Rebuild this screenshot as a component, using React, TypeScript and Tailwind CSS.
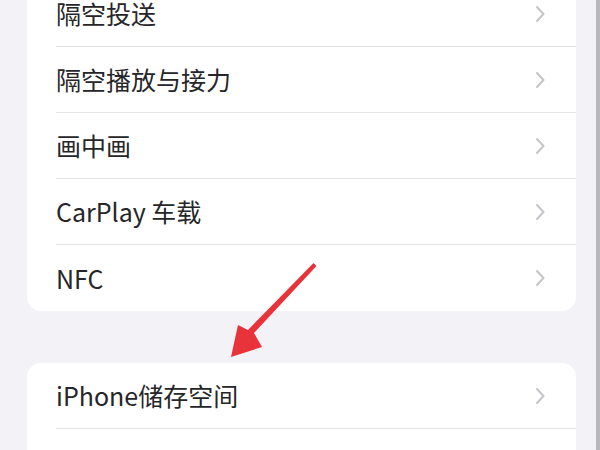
import React from 'react';

const groups: string[][] = [
  ['隔空投送', '隔空播放与接力', '画中画', 'CarPlay 车载', 'NFC'],
  ['iPhone储存空间', '后台App刷新'],
];

const Chevron = () => (
  <svg width="10" height="18" viewBox="0 0 10 18" fill="none" className="shrink-0">
    <path d="M2 2l6.5 7L2 16" stroke="#c4c4c9" strokeWidth="2" strokeLinecap="round" strokeLinejoin="round" />
  </svg>
);

const Row = ({ label, last }: { label: string; last: boolean }) => (
  <div className="flex h-[66px] shrink-0 pl-[29px]">
    <div
      className={
        'flex flex-1 items-center justify-between pr-[31px] ' +
        (last ? '' : 'border-b border-[#e3e3e8]')
      }
    >
      <span className="text-[25px] leading-none text-[#262628]">{label}</span>
      <Chevron />
    </div>
  </div>
);

export default function App() {
  return (
    <div
      className="relative flex h-[450px] w-[600px] overflow-hidden bg-[#f2f2f7]"
      style={{ fontFamily: '"Noto Sans CJK SC", "Noto Sans", sans-serif' }}
    >
      <div className="flex flex-1 flex-col gap-[52px] pl-[27px] pr-[20px] -mt-[19px]">
        {groups.map((items, gi) => (
          <div key={gi} className="shrink-0 overflow-hidden rounded-[14px] bg-white">
            {items.map((label, i) => (
              <Row key={label} label={label} last={i === items.length - 1} />
            ))}
          </div>
        ))}
      </div>
      <div className="w-[4px] bg-[#b8b8bc]" />

      {/* red annotation arrow */}
      <svg className="absolute left-0 top-0 pointer-events-none" width="600" height="450" viewBox="0 0 600 450">
        <path
          d="M313.5 263 L316.5 266 L254 333 L262 347 L231 357 L238 325 L248 330 Z"
          fill="#e8333b"
        />
      </svg>
    </div>
  );
}
